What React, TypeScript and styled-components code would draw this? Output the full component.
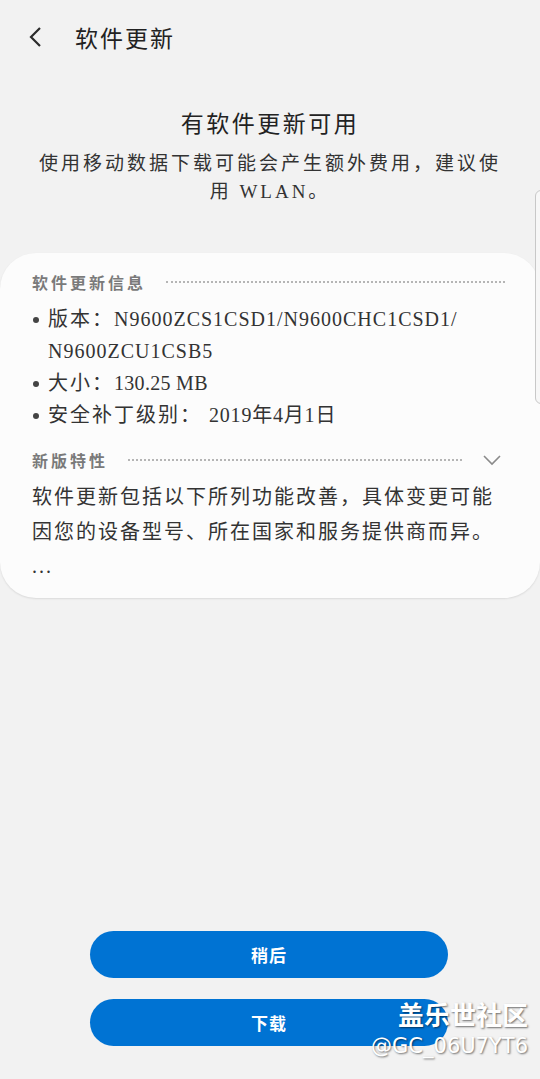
import React from "react";
import styled, { createGlobalStyle } from "styled-components";

const GlobalStyle = createGlobalStyle`
  html, body {
    margin: 0;
    padding: 0;
    background: #f2f2f2;
  }
  body {
    font-family: "Liberation Serif", "Noto Sans CJK SC", serif;
    color: #2b2b2b;
  }
`;

const App: React.FC = () => {
  return (
    <Page>
      <GlobalStyle />
      <Header>
        <BackButton>
          <svg width="14" height="22" viewBox="0 0 14 22">
            <path d="M12 2 L3 11 L12 20" fill="none" stroke="#2b2b2b" strokeWidth="2.2" />
          </svg>
        </BackButton>
        <HeaderTitle>软件更新</HeaderTitle>
      </Header>

      <Hero>
        <HeroTitle>有软件更新可用</HeroTitle>
        <HeroText>使用移动数据下载可能会产生额外费用，建议使用 WLAN。</HeroText>
      </Hero>

      <Card>
        <SectionHead>
          <SectionLabel>软件更新信息</SectionLabel>
          <Dots />
        </SectionHead>
        <InfoList>
          <InfoItem>
            版本：<Latin $spacing={1}>N9600ZCS1CSD1/N9600CHC1CSD1/<wbr />N9600ZCU1CSB5</Latin>
          </InfoItem>
          <InfoItem>
            大小：<Latin $spacing={0.3}>130.25 MB</Latin>
          </InfoItem>
          <InfoItem>
            安全补丁级别： <Latin $spacing={0.8}>2019年4月1日</Latin>
          </InfoItem>
        </InfoList>

        <SectionHead $gap>
          <SectionLabel>新版特性</SectionLabel>
          <Dots />
          <svg width="20" height="12" viewBox="0 0 20 12">
            <path d="M2 2 L10 10 L18 2" fill="none" stroke="#8a8a8a" strokeWidth="1.6" />
          </svg>
        </SectionHead>
        <Notes>
          软件更新包括以下所列功能改善，具体变更可能因您的设备型号、所在国家和服务提供商而异。
          <br />
          ...
        </Notes>
      </Card>

      <Spacer />

      <Buttons>
        <PillButton>稍后</PillButton>
        <PillButton>下载</PillButton>
      </Buttons>

      <ScrollHint />
      <Watermark>
        <WatermarkBrand>盖乐世社区</WatermarkBrand>
        <WatermarkId>@GC_06U7YT6</WatermarkId>
      </Watermark>
    </Page>
  );
};

export default App;

const Page = styled.div`
  position: relative;
  width: 540px;
  height: 1079px;
  display: flex;
  flex-direction: column;
  background: #f2f2f2;
  overflow: hidden;
`;

const Header = styled.div`
  height: 74px;
  display: flex;
  align-items: center;
  padding-left: 28px;
  box-sizing: border-box;
`;

const BackButton = styled.div`
  width: 14px;
  height: 22px;
  display: flex;
  margin-right: 33px;
`;

const HeaderTitle = styled.h1`
  margin: 0;
  font-size: 23px;
  font-weight: 400;
  letter-spacing: 2px;
  color: #222;
`;

const Hero = styled.div`
  padding: 34px 32px 0;
  text-align: center;
`;

const HeroTitle = styled.h2`
  margin: 0;
  font-size: 23px;
  font-weight: 400;
  letter-spacing: 2.5px;
  line-height: 34px;
  color: #222;
`;

const HeroText = styled.p`
  margin: 8px 0 0;
  font-size: 19px;
  letter-spacing: 3px;
  line-height: 28px;
  color: #333;
`;

const Card = styled.div`
  margin-top: 47px;
  background: #fcfcfc;
  border-radius: 36px;
  box-shadow: 0 1px 2px rgba(0, 0, 0, 0.1);
  padding: 14px 32px 14px 32px;
`;

const SectionHead = styled.div<{ $gap?: boolean }>`
  display: flex;
  align-items: center;
  gap: 20px;
  height: 30px;
  margin-top: ${(p) => (p.$gap ? "14px" : "0")};
  margin-right: ${(p) => (p.$gap ? "6px" : "3px")};
`;

const SectionLabel = styled.span`
  font-size: 16px;
  letter-spacing: 3px;
  color: #7a7a7a;
  font-weight: 600;
`;

const Dots = styled.span`
  flex: 1;
  height: 0;
  border-top: 2px dotted #b5b5b5;
`;

const InfoList = styled.ul`
  list-style: none;
  margin: 6px 0 0;
  padding: 0;
`;

const InfoItem = styled.li`
  position: relative;
  padding-left: 16px;
  font-size: 20px;
  letter-spacing: 2px;
  line-height: 32px;
  color: #333;

  &::before {
    content: "";
    position: absolute;
    left: 1px;
    top: 14px;
    width: 6px;
    height: 6px;
    border-radius: 50%;
    background: #444;
  }
`;

const Latin = styled.span<{ $spacing: number }>`
  letter-spacing: ${(p) => p.$spacing}px;
`;

const Notes = styled.p`
  margin: 5px 0 0;
  font-size: 20px;
  letter-spacing: 2px;
  line-height: 34.5px;
  color: #333;
`;

const Spacer = styled.div`
  flex: 1;
`;

const Buttons = styled.div`
  display: flex;
  flex-direction: column;
  align-items: center;
  gap: 21px;
  padding-bottom: 33px;
  padding-right: 2px;
`;

const PillButton = styled.button`
  width: 358px;
  height: 47px;
  border: none;
  border-radius: 24px;
  background: #0073d3;
  color: #fff;
  font-family: "Noto Sans CJK SC", sans-serif;
  font-size: 17px;
  font-weight: 700;
  letter-spacing: 1px;
`;

const ScrollHint = styled.div`
  position: absolute;
  left: 535px;
  top: 190px;
  width: 10px;
  height: 212px;
  border: 1px solid #c8c8c8;
  border-radius: 6px;
  background: #f7f7f7;
`;

const Watermark = styled.div`
  position: absolute;
  right: 12px;
  bottom: 18px;
  display: flex;
  flex-direction: column;
  align-items: flex-end;
  font-family: "Noto Sans CJK SC", sans-serif;
  color: #fff;
  text-shadow: 1px 1px 2px rgba(0, 0, 0, 0.55);
  pointer-events: none;
`;

const WatermarkBrand = styled.span`
  font-size: 26px;
  font-weight: 700;
  line-height: 34px;
`;

const WatermarkId = styled.span`
  font-family: "DejaVu Sans", sans-serif;
  font-size: 21px;
  line-height: 30px;
`;
